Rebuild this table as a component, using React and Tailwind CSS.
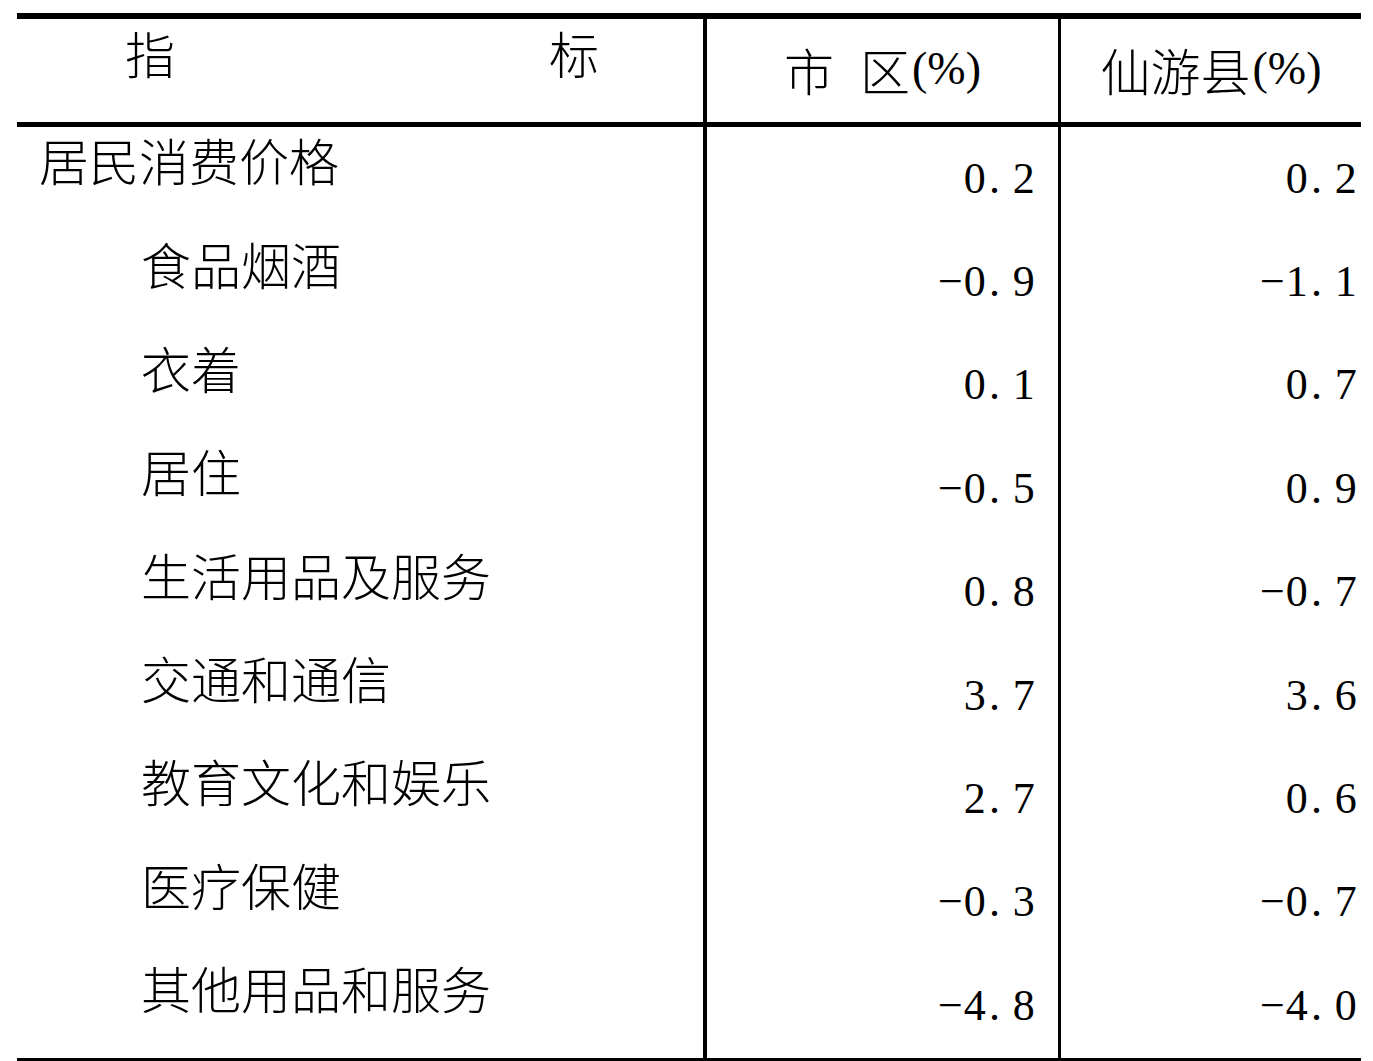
import React from "react";

const rows = [
  { label: "居民消费价格", main: true, a: "0.2", b: "0.2" },
  { label: "食品烟酒", a: "−0.9", b: "−1.1" },
  { label: "衣着", a: "0.1", b: "0.7" },
  { label: "居住", a: "−0.5", b: "0.9" },
  { label: "生活用品及服务", a: "0.8", b: "−0.7" },
  { label: "交通和通信", a: "3.7", b: "3.6" },
  { label: "教育文化和娱乐", a: "2.7", b: "0.6" },
  { label: "医疗保健", a: "−0.3", b: "−0.7" },
  { label: "其他用品和服务", a: "−4.8", b: "−4.0" },
];

const cjk = { fontFamily: '"Noto Sans CJK SC", sans-serif' };
const serif = { fontFamily: '"Liberation Serif", "DejaVu Serif", serif' };

function Num({ v }) {
  return (
    <div className="flex text-[44px] leading-none text-black" style={serif}>
      {v.split("").map((c, i) => (
        <span
          key={i}
          className={
            c === "."
              ? "inline-block w-[24.5px] text-left pl-[2px]"
              : "inline-block w-[24.5px] text-center"
          }
        >
          {c}
        </span>
      ))}
    </div>
  );
}

export default function App() {
  return (
    <div className="w-[1373px] h-[1061px] bg-white overflow-hidden">
      <div className="ml-[17px] pt-[13px] w-[1344px]">
        <div className="border-t-[6px] border-black" />
        <div className="grid grid-cols-[690px_354px_300px] h-[103px]">
          <div
            className="border-r-4 border-black flex justify-between items-start pt-[8px] pl-[108px] pr-[104px] text-[50px] leading-none font-light text-black"
            style={cjk}
          >
            <span>指</span>
            <span>标</span>
          </div>
          <div className="border-r-[3px] border-black flex items-center justify-center pb-[4px] text-[50px] leading-none text-black">
            <span className="font-light" style={cjk}>市</span>
            <span className="font-light ml-[26px]" style={cjk}>区</span>
            <span className="text-[46px] font-normal ml-[2px]" style={serif}>(%)</span>
          </div>
          <div className="flex items-center justify-center pb-[4px] text-[50px] leading-none text-black">
            <span className="font-light" style={cjk}>仙游县</span>
            <span className="text-[46px] font-normal ml-[2px]" style={serif}>(%)</span>
          </div>
        </div>
        <div className="border-t-[5px] border-black" />
        <div className="flex flex-col">
          {rows.map((r, i) => (
            <div key={i} className="grid grid-cols-[690px_354px_300px] h-[103.4px]">
              <div
                className={
                  r.main
                    ? "border-r-4 border-black flex items-start pt-[7px] pl-[22px] text-[50px] leading-none font-light text-black"
                    : "border-r-4 border-black flex items-start pt-[8px] pl-[124px] text-[50px] leading-none font-light text-black"
                }
                style={cjk}
              >
                {r.label}
              </div>
              <div className="border-r-[3px] border-black flex items-center justify-end pr-[22px]">
                <Num v={r.a} />
              </div>
              <div className="flex items-center justify-end pr-[3px]">
                <Num v={r.b} />
              </div>
            </div>
          ))}
        </div>
        <div className="border-t-4 border-black" />
      </div>
    </div>
  );
}
